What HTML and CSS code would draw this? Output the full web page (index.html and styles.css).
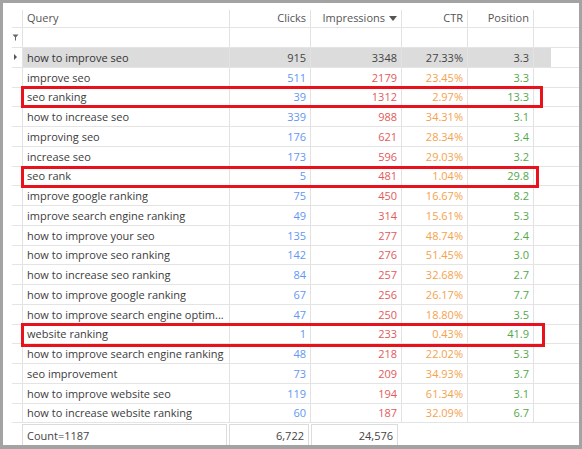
FILE: index.html
```html
<!DOCTYPE html>
<html>
<head>
<meta charset="utf-8">
<link rel="stylesheet" href="styles.css">
</head>
<body>
<div class="frame">
  <div class="grid">
    <div class="row head">
      <div class="rh"></div>
      <div class="c q">Query</div>
      <div class="c n">Clicks</div>
      <div class="c n">Impressions <span class="sort"></span></div>
      <div class="c n">CTR</div>
      <div class="c n">Position</div>
      <div class="c f"></div>
    </div>
    <div class="row filter">
      <div class="rh"><svg width="7" height="7" viewBox="0 0 7 7"><path d="M0.5 0.5h6L4 3.2V6.5H3V3.2z" fill="#666"/></svg></div>
      <div class="c q"></div><div class="c n"></div><div class="c n"></div><div class="c n"></div><div class="c n"></div><div class="c f"></div>
    </div>
    <div class="row data sel"><div class="rh"><span class="arrow"></span></div><div class="c q">how to improve seo</div><div class="c n">915</div><div class="c n">3348</div><div class="c n">27.33%</div><div class="c n">3.3</div><div class="c f"></div></div>
    <div class="row data"><div class="rh"></div><div class="c q">improve seo</div><div class="c n b">511</div><div class="c n r">2179</div><div class="c n o">23.45%</div><div class="c n g">3.3</div><div class="c f"></div></div>
    <div class="row data"><div class="rh"></div><div class="c q">seo ranking</div><div class="c n b">39</div><div class="c n r">1312</div><div class="c n o">2.97%</div><div class="c n g">13.3</div><div class="c f"></div></div>
    <div class="row data"><div class="rh"></div><div class="c q">how to increase seo</div><div class="c n b">339</div><div class="c n r">988</div><div class="c n o">34.31%</div><div class="c n g">3.1</div><div class="c f"></div></div>
    <div class="row data"><div class="rh"></div><div class="c q">improving seo</div><div class="c n b">176</div><div class="c n r">621</div><div class="c n o">28.34%</div><div class="c n g">3.4</div><div class="c f"></div></div>
    <div class="row data"><div class="rh"></div><div class="c q">increase seo</div><div class="c n b">173</div><div class="c n r">596</div><div class="c n o">29.03%</div><div class="c n g">3.2</div><div class="c f"></div></div>
    <div class="row data"><div class="rh"></div><div class="c q">seo rank</div><div class="c n b">5</div><div class="c n r">481</div><div class="c n o">1.04%</div><div class="c n g">29.8</div><div class="c f"></div></div>
    <div class="row data"><div class="rh"></div><div class="c q">improve google ranking</div><div class="c n b">75</div><div class="c n r">450</div><div class="c n o">16.67%</div><div class="c n g">8.2</div><div class="c f"></div></div>
    <div class="row data"><div class="rh"></div><div class="c q">improve search engine ranking</div><div class="c n b">49</div><div class="c n r">314</div><div class="c n o">15.61%</div><div class="c n g">5.3</div><div class="c f"></div></div>
    <div class="row data"><div class="rh"></div><div class="c q">how to improve your seo</div><div class="c n b">135</div><div class="c n r">277</div><div class="c n o">48.74%</div><div class="c n g">2.4</div><div class="c f"></div></div>
    <div class="row data"><div class="rh"></div><div class="c q">how to improve seo ranking</div><div class="c n b">142</div><div class="c n r">276</div><div class="c n o">51.45%</div><div class="c n g">3.0</div><div class="c f"></div></div>
    <div class="row data"><div class="rh"></div><div class="c q">how to increase seo ranking</div><div class="c n b">84</div><div class="c n r">257</div><div class="c n o">32.68%</div><div class="c n g">2.7</div><div class="c f"></div></div>
    <div class="row data"><div class="rh"></div><div class="c q">how to improve google ranking</div><div class="c n b">67</div><div class="c n r">256</div><div class="c n o">26.17%</div><div class="c n g">7.7</div><div class="c f"></div></div>
    <div class="row data"><div class="rh"></div><div class="c q">how to improve search engine optim...</div><div class="c n b">47</div><div class="c n r">250</div><div class="c n o">18.80%</div><div class="c n g">3.5</div><div class="c f"></div></div>
    <div class="row data"><div class="rh"></div><div class="c q">website ranking</div><div class="c n b">1</div><div class="c n r">233</div><div class="c n o">0.43%</div><div class="c n g">41.9</div><div class="c f"></div></div>
    <div class="row data"><div class="rh"></div><div class="c q">how to improve search engine ranking</div><div class="c n b">48</div><div class="c n r">218</div><div class="c n o">22.02%</div><div class="c n g">5.3</div><div class="c f"></div></div>
    <div class="row data"><div class="rh"></div><div class="c q">seo improvement</div><div class="c n b">73</div><div class="c n r">209</div><div class="c n o">34.93%</div><div class="c n g">3.7</div><div class="c f"></div></div>
    <div class="row data"><div class="rh"></div><div class="c q">how to improve website seo</div><div class="c n b">119</div><div class="c n r">194</div><div class="c n o">61.34%</div><div class="c n g">3.1</div><div class="c f"></div></div>
    <div class="row data"><div class="rh"></div><div class="c q">how to increase website ranking</div><div class="c n b">60</div><div class="c n r">187</div><div class="c n o">32.09%</div><div class="c n g">6.7</div><div class="c f"></div></div>
    <div class="foot">
      <div class="fc fq">Count=1187</div>
      <div class="fc fclk">6,722</div>
      <div class="fc fimp">24,576</div>
    </div>
  </div>
  <div class="hl hl1"></div>
  <div class="hl hl2"></div>
  <div class="hl hl3"></div>
</div>
</body>
</html>
```
FILE: styles.css
```css
html, body {
  margin: 0;
  padding: 0;
}
body {
  background: #a3a3a3;
  font-family: "Open Sans", "Noto Sans", sans-serif;
  font-size: 11px;
  color: #3c3c3c;
}
.frame {
  position: relative;
  margin: 3px 3px 0 3px;
  width: 576px;
  height: 442px;
  background: #fff;
}
.grid {
  padding: 7px 0 0 9px;
}
.row {
  display: grid;
  grid-template-columns: 10px 207px 81px 91px 66px 66px 18px;
  box-sizing: border-box;
  border-bottom: 1px solid #e4e4e4;
}
.head { height: 18px; color: #555; }
.filter { height: 20px; }
.data { height: 19.75px; }
.c {
  border-left: 1px solid #e2e2e2;
  box-sizing: border-box;
  white-space: nowrap;
  overflow: hidden;
  display: flex;
  align-items: center;
  padding: 0 4px;
  line-height: 1;
}
.n { justify-content: flex-end; }
.q { justify-content: flex-start; padding-left: 4px; }
.head .c { align-items: flex-start; padding-top: 2px; }
.rh {
  display: flex;
  align-items: center;
  justify-content: center;
  padding-right: 3px;
}
.arrow {
  width: 0; height: 0;
  border-top: 3px solid transparent;
  border-bottom: 3px solid transparent;
  border-left: 3px solid #555;
}
.sort {
  display: inline-block;
  width: 0; height: 0;
  margin-left: 4px;
  margin-top: 4px;
  border-left: 4px solid transparent;
  border-right: 4px solid transparent;
  border-top: 5px solid #555;
}
.sel .c { background: #dcdcdc; color: #444; }
.sel .c.q { color: #333; }
.sel .c.f { background: #dcdcdc; }
.b { color: #6396f4; }
.r { color: #e25a5a; }
.o { color: #f4a24c; }
.g { color: #52a84a; }
.foot {
  display: flex;
  gap: 2px;
  margin-top: 1px;
  padding-left: 10px;
  height: 22px;
}
.fc {
  box-sizing: border-box;
  border: 1px solid #dcdcdc;
  display: flex;
  align-items: center;
  padding: 0 4px;
  color: #444;
}
.fq { width: 205px; }
.fclk { width: 80px; justify-content: flex-end; }
.fimp { width: 87px; justify-content: flex-end; }
.hl {
  position: absolute;
  border: 3px solid #e8121c;
  box-sizing: border-box;
}
.hl1 { left: 18px; top: 83px; width: 522px; height: 22px; }
.hl2 { left: 18px; top: 163px; width: 518px; height: 22px; }
.hl3 { left: 18px; top: 320px; width: 524px; height: 24px; }
```
